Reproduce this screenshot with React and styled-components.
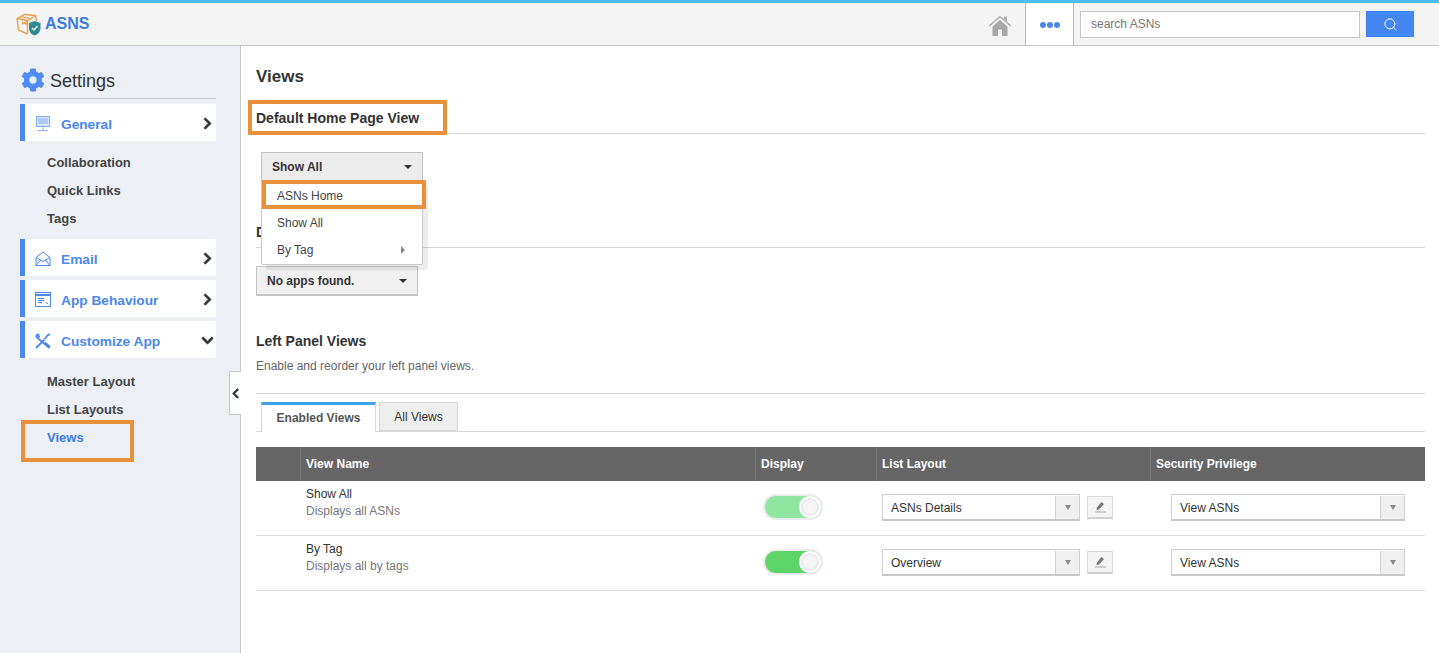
import React from "react";
import styled, { createGlobalStyle } from "styled-components";
import { FaCog, FaChevronRight, FaChevronDown, FaChevronLeft } from "react-icons/fa";
import { Search } from "lucide-react";

const Global = createGlobalStyle`
  html, body { margin: 0; padding: 0; height: 100%; overflow: hidden; background: #fff; }
  body { font-family: "Liberation Sans", Arial, sans-serif; color: #333; }
  * { box-sizing: border-box; }
`;

const Logo = () => (
  <svg width="27" height="23" viewBox="0 0 26 23" fill="none">
    <path d="M1.5 5.5 L9 1.5 L20 2.5 L21 8 M1.5 5.5 L3 17 L12 21 M1.5 5.5 L12 7.5 L20 2.5 M12 7.5 L12 20" stroke="#e9a04c" strokeWidth="1.4" />
    <path d="M5 3.7 L14 5.2 L14 6.5 M7 8 L7 11 L9 9.8 L10.5 11.5 L10.5 7.6" stroke="#e9a04c" strokeWidth="1.2" />
    <path d="M19 8 L25 10 L25 15 C25 19 22 21.5 19 22.5 C16 21.5 13.5 19 13.5 15 L13.5 10 Z" fill="#2e8b8f" />
    <path d="M16.5 15 L18.5 17 L22 13" stroke="#fff" strokeWidth="1.4" />
  </svg>
);

const HomeIcon = () => (
  <svg width="22" height="21" viewBox="0 0 22 21">
    <path d="M11 0.5 L15 4 V1.5 H18 V6.7 L22 10.3 L21 11.2 L11 2.6 L1 11.2 L0 10.3 Z" fill="#b0b0b0" />
    <path d="M3.5 11.5 L11 5 L18.5 11.5 V21 H13 V14.5 H9 V21 H3.5 Z" fill="#a6a6a6" />
  </svg>
);

const MonitorIcon = () => (
  <svg width="16" height="16" viewBox="0 0 16 16" fill="none" stroke="#85aef5">
    <rect x="1.5" y="0.5" width="13" height="10" fill="#d6e4fb" />
    <path d="M3 3h10M3 5h10M3 7h10M8 11v3M3 14.5h10" />
  </svg>
);

const MailIcon = () => (
  <svg width="16" height="16" viewBox="0 0 16 16" fill="none" stroke="#4a87ee">
    <path d="M1 6.5 L8 1 L15 6.5 V14.5 H1 Z M1 6.5 L8 10.5 L15 6.5 M1 14.5 L6 9 M15 14.5 L10 9" />
  </svg>
);

const WindowIcon = () => (
  <svg width="16" height="15" viewBox="0 0 16 15" fill="none" stroke="#4a87ee">
    <rect x="0.5" y="0.5" width="15" height="14" />
    <path d="M0.5 3h15" strokeWidth="2" />
    <path d="M3 6.5h6M3 8.5h6M3 10.5h4M11 10l2 2" />
  </svg>
);

const ToolsIcon = () => (
  <svg width="16" height="16" viewBox="0 0 16 16" fill="none" stroke="#4a87ee" strokeWidth="1.8">
    <path d="M1 15 L9.5 6.5 M3.5 1 C1.5 1.5 1 3 1.8 4.5 L14.5 15 M3.5 1 L3.5 3.5 L5 4" />
    <path d="M15 1 L12.5 2.5 L9.5 6 M10 9.5 L15 14" />
  </svg>
);

const PencilIcon = () => (
  <svg width="13" height="12" viewBox="0 0 13 12" fill="#777">
    <path d="M7.5 1 L10 3 L5 8.5 L2.5 9 L3 6.5 Z" />
    <path d="M1 11 H12" stroke="#aaa" strokeWidth="1" />
  </svg>
);

const Page = styled.div`
  width: 1439px;
  height: 653px;
  display: flex;
  flex-direction: column;
  border-top: 3px solid #4dbdf5;
`;

const Header = styled.header`
  height: 43px;
  flex: none;
  display: flex;
  align-items: stretch;
  background: #f4f4f4;
  border-bottom: 1px solid #c8c8c8;
`;

const Brand = styled.div`
  display: flex;
  align-items: center;
  gap: 3px;
  padding-left: 15px;
  margin-right: auto;
  font-size: 16px;
  font-weight: 700;
  color: #3c7be0;
`;

const HomeLink = styled.div`
  width: 52px;
  display: flex;
  align-items: center;
  justify-content: center;
  padding: 2px 0 0 2px;
`;

const MoreTab = styled.div`
  width: 49px;
  display: flex;
  align-items: center;
  justify-content: center;
  gap: 1px;
  background: #fff;
  border-left: 1px solid #bcbcbc;
  border-right: 1px solid #bcbcbc;
  padding-top: 2px;
`;

const Dot = styled.span`
  width: 6px;
  height: 6px;
  border-radius: 50%;
  background: #4a87ee;
`;

const SearchBar = styled.div`
  display: flex;
  align-items: center;
  gap: 6px;
  padding: 0 25px 0 6px;
`;

const SearchInput = styled.div`
  width: 280px;
  height: 27px;
  display: flex;
  align-items: center;
  padding-left: 10px;
  background: #fff;
  border: 1px solid #c8c8c8;
  font-size: 12px;
  color: #757575;
`;

const SearchButton = styled.div`
  width: 48px;
  height: 26px;
  display: flex;
  align-items: center;
  justify-content: center;
  background: #4487f2;
  border: 1px solid #3f7fe6;
  color: #fff;
`;

const Body = styled.div`
  flex: 1;
  display: flex;
  min-height: 0;
`;

const Sidebar = styled.aside`
  position: relative;
  width: 241px;
  flex: none;
  padding: 22px 24px 0 20px;
  background: #ecf0f5;
  border-right: 1px solid #c8c8c8;
`;

const SideTitle = styled.div`
  height: 31px;
  display: flex;
  align-items: center;
  gap: 5px;
  padding: 0 0 3px 1px;
  margin-bottom: 5px;
  border-bottom: 1px solid #c8c8c8;
  font-size: 18px;
  color: #333;
  svg { color: #4f8df5; font-size: 24px; margin-top: -3px; }
`;

const NavItem = styled.div`
  height: 37px;
  display: flex;
  align-items: center;
  margin-bottom: ${(p) => (p.$flush ? 0 : "4px")};
  padding: 2px 2px 0 10px;
  background: #fff;
  border-left: 5px solid #4a87f2;
  color: #4a87ee;
  font-size: 13.7px;
  font-weight: 700;
  svg:last-child {
    margin-left: auto;
    color: #333;
    font-size: 13px;
    stroke: currentColor;
    stroke-width: 35;
  }
`;

const NavLabel = styled.span`
  margin: 1px 0 0 10px;
`;

const SubList = styled.div`
  padding: ${(p) => p.$top}px 0 7px 27px;
`;

const SubItem = styled.div`
  height: 28px;
  display: flex;
  align-items: center;
  font-size: 13px;
  font-weight: 700;
  color: ${(p) => (p.$active ? "#3c7be0" : "#444")};
`;

const Collapse = styled.div`
  position: absolute;
  left: 229px;
  top: 325px;
  width: 12px;
  height: 44px;
  display: flex;
  align-items: center;
  justify-content: center;
  background: #fff;
  border: 1px solid #c8c8c8;
  border-right: none;
  font-size: 11px;
  color: #333;
  svg { stroke: currentColor; stroke-width: 35; }
`;

const Mark = styled.div`
  position: absolute;
  border: 4px solid #e8913a;
  border-radius: 1px;
  pointer-events: none;
`;

const ViewsMark = styled(Mark)`
  left: 21px;
  top: 374px;
  width: 113px;
  height: 42px;
`;

const HeadingMark = styled(Mark)`
  left: 7px;
  top: 54px;
  width: 199px;
  height: 35px;
`;

const MenuMark = styled(Mark)`
  left: 0;
  top: -2px;
  width: 164px;
  height: 29px;
`;

const Main = styled.main`
  position: relative;
  flex: 1;
  padding: 0 14px 0 15px;
`;

const PageTitle = styled.h1`
  height: 61px;
  margin: 0;
  padding-top: 21px;
  font-size: 17px;
  line-height: 20px;
  font-weight: 700;
  color: #333;
`;

const SectionHead = styled.div`
  height: ${(p) => p.$height}px;
  display: flex;
  align-items: flex-end;
  padding-bottom: 7px;
  border-bottom: 1px solid #d4d4d4;
  font-size: 14px;
  line-height: 16px;
  font-weight: 700;
  color: #333;
`;

const DropWrap = styled.div`
  position: relative;
  width: 162px;
  margin: ${(p) => (p.$nested ? "18px 0 0 5px" : "18px 0 0")};
`;

const DropButton = styled.div`
  height: ${(p) => p.$height}px;
  display: flex;
  align-items: center;
  justify-content: space-between;
  padding: ${(p) => (p.$flat ? 0 : "1px")} 10px 0;
  background: ${(p) => p.$bg};
  border: 1px solid #c4c4c4;
  border-bottom-width: ${(p) => (p.$flat ? 0 : "2px")};
  font-size: 12px;
  font-weight: 700;
  color: #333;
`;

const Caret = styled.span`
  width: 0;
  height: 0;
  border-left: 4px solid transparent;
  border-right: 4px solid transparent;
  border-top: 4px solid #333;
`;

const Menu = styled.div`
  position: absolute;
  left: 0;
  top: 29px;
  z-index: 2;
  width: 162px;
  height: 84px;
  background: #fff;
  border: 1px solid #c8c8c8;
  border-radius: 0 0 2px 2px;
  box-shadow: 5px 5px 0 rgba(0, 0, 0, 0.07);
`;

const MenuRow = styled.div`
  height: 27px;
  display: flex;
  align-items: center;
  justify-content: space-between;
  padding: 0 15px;
  font-size: 12px;
  color: #444;
`;

const SideCaret = styled.span`
  width: 0;
  height: 0;
  margin-right: 2px;
  border-top: 4px solid transparent;
  border-bottom: 4px solid transparent;
  border-left: 4px solid #888;
`;

const PanelHead = styled.div`
  margin-top: 37px;
  font-size: 14px;
  line-height: 16px;
  font-weight: 700;
  color: #333;
`;

const PanelDesc = styled.div`
  height: 36px;
  margin-top: 9px;
  padding-top: 1px;
  line-height: 14px;
  font-size: 12px;
  color: #666;
  border-bottom: 1px solid #d4d4d4;
`;

const Tabs = styled.div`
  height: 30px;
  margin-top: 8px;
  display: flex;
  align-items: flex-end;
  gap: 3px;
  padding-left: 5px;
  border-bottom: 1px solid #d8d8d8;
`;

const Tab = styled.div`
  height: ${(p) => (p.$on ? 30 : 29)}px;
  width: ${(p) => p.$w}px;
  display: flex;
  align-items: center;
  justify-content: center;
  margin-bottom: ${(p) => (p.$on ? "-1px" : 0)};
  padding-bottom: ${(p) => (p.$on ? "1px" : 0)};
  background: ${(p) => (p.$on ? "#fff" : "#eeeeee")};
  border: 1px solid #d8d8d8;
  border-top: ${(p) => (p.$on ? "3px solid #3aa5ee" : "1px solid #d8d8d8")};
  border-bottom: ${(p) => (p.$on ? "none" : "1px solid #d8d8d8")};
  font-size: 12px;
  font-weight: ${(p) => (p.$on ? 700 : 400)};
  color: ${(p) => (p.$on ? "#555" : "#333")};
`;

const Row = styled.div`
  display: grid;
  grid-template-columns: 44px 455px 121px 274px 275px;
`;

const HeadRow = styled(Row)`
  height: 34px;
  margin-top: 15px;
  background: #666;
  color: #fff;
  font-size: 12px;
  font-weight: 700;
`;

const HeadCell = styled.div`
  display: flex;
  align-items: center;
  padding-left: 5px;
  border-left: ${(p) => (p.$first ? "none" : "1px solid #7a7a7a")};
`;

const DataRow = styled(Row)`
  height: 55px;
  border-bottom: 1px solid #dcdcdc;
  align-items: center;
`;

const NameCell = styled.div`
  grid-column: 2;
  padding: 0 0 10px 6px;
  font-size: 12px;
  line-height: 17px;
  color: #333;
`;

const NameHint = styled.div`
  color: #777;
`;

const ToggleCell = styled.div`
  padding-left: 8px;
`;

const Toggle = styled.div`
  position: relative;
  width: 60px;
  height: 26px;
  margin-top: -2px;
  border-radius: 13px;
  background: #ececec;
  padding: 2px;
`;

const ToggleTrack = styled.div`
  height: 100%;
  border-radius: 11px;
  background: ${(p) => p.$color};
`;

const ToggleKnob = styled.div`
  position: absolute;
  right: 2px;
  top: 2px;
  width: 22px;
  height: 22px;
  border-radius: 50%;
  background: #f6f6f6;
  border: 2px solid #fff;
  box-shadow: inset 0 0 3px #ccc;
`;

const LayoutCell = styled.div`
  display: flex;
  align-items: center;
  gap: 7px;
  padding-left: 6px;
`;

const PrivilegeCell = styled.div`
  padding-left: 21px;
`;

const Combo = styled.div`
  width: ${(p) => p.$w}px;
  height: 27px;
  margin-top: -1px;
  padding-top: 1px;
  display: flex;
  align-items: center;
  background: #fff;
  border: 1px solid #d0d0d0;
  border-bottom: 2px solid #c8c8c8;
  font-size: 12px;
  color: #333;
`;

const ComboText = styled.span`
  flex: 1;
  padding-left: 8px;
`;

const ComboArrow = styled.span`
  width: 24px;
  height: 100%;
  display: flex;
  align-items: center;
  justify-content: center;
  background: #efefef;
  border-left: 1px solid #d0d0d0;
  &::after {
    content: "";
    border-left: 3px solid transparent;
    border-right: 3px solid transparent;
    border-top: 5px solid #888;
  }
`;

const EditButton = styled.div`
  width: 26px;
  height: 23px;
  margin-top: -2px;
  display: flex;
  align-items: center;
  justify-content: center;
  background: #f4f4f4;
  border: 1px solid #d8d8d8;
  border-bottom: 2px solid #cfcfcf;
`;

const rows = [
  { name: "Show All", hint: "Displays all ASNs", layout: "ASNs Details", color: "#8fe6a0" },
  { name: "By Tag", hint: "Displays all by tags", layout: "Overview", color: "#5fd468" },
];

export default function App() {
  return (
    <Page>
      <Global />
      <Header>
        <Brand>
          <Logo />
          ASNS
        </Brand>
        <HomeLink>
          <HomeIcon />
        </HomeLink>
        <MoreTab>
          <Dot />
          <Dot />
          <Dot />
        </MoreTab>
        <SearchBar>
          <SearchInput>search ASNs</SearchInput>
          <SearchButton>
            <Search size={15} strokeWidth={1.6} />
          </SearchButton>
        </SearchBar>
      </Header>
      <Body>
        <Sidebar>
          <SideTitle>
            <FaCog />
            Settings
          </SideTitle>
          <NavItem $flush>
            <MonitorIcon />
            <NavLabel>General</NavLabel>
            <FaChevronRight />
          </NavItem>
          <SubList $top={7}>
            <SubItem>Collaboration</SubItem>
            <SubItem>Quick Links</SubItem>
            <SubItem>Tags</SubItem>
          </SubList>
          <NavItem>
            <MailIcon />
            <NavLabel>Email</NavLabel>
            <FaChevronRight />
          </NavItem>
          <NavItem>
            <WindowIcon />
            <NavLabel>App Behaviour</NavLabel>
            <FaChevronRight />
          </NavItem>
          <NavItem $flush>
            <ToolsIcon />
            <NavLabel>Customize App</NavLabel>
            <FaChevronDown />
          </NavItem>
          <SubList $top={9}>
            <SubItem>Master Layout</SubItem>
            <SubItem>List Layouts</SubItem>
            <SubItem $active>Views</SubItem>
          </SubList>
          <ViewsMark />
          <Collapse>
            <FaChevronLeft />
          </Collapse>
        </Sidebar>
        <Main>
          <PageTitle>Views</PageTitle>
          <SectionHead $height={27}>Default Home Page View</SectionHead>
          <HeadingMark />
          <DropWrap $nested>
            <DropButton $height={29} $bg="#ececec" $flat>
              Show All
              <Caret />
            </DropButton>
            <Menu>
              <MenuRow>ASNs Home</MenuRow>
              <MenuRow>Show All</MenuRow>
              <MenuRow>
                By Tag
                <SideCaret />
              </MenuRow>
              <MenuMark />
            </Menu>
          </DropWrap>
          <SectionHead $height={67}>D</SectionHead>
          <DropWrap>
            <DropButton $height={30} $bg="#f0f0f0">
              No apps found.
              <Caret />
            </DropButton>
          </DropWrap>
          <PanelHead>Left Panel Views</PanelHead>
          <PanelDesc>Enable and reorder your left panel views.</PanelDesc>
          <Tabs>
            <Tab $on $w={115}>
              Enabled Views
            </Tab>
            <Tab $w={79}>All Views</Tab>
          </Tabs>
          <HeadRow>
            <HeadCell $first />
            <HeadCell>View Name</HeadCell>
            <HeadCell>Display</HeadCell>
            <HeadCell>List Layout</HeadCell>
            <HeadCell>Security Privilege</HeadCell>
          </HeadRow>
          {rows.map((row) => (
            <DataRow key={row.name}>
              <NameCell>
                {row.name}
                <NameHint>{row.hint}</NameHint>
              </NameCell>
              <ToggleCell>
                <Toggle>
                  <ToggleTrack $color={row.color} />
                  <ToggleKnob />
                </Toggle>
              </ToggleCell>
              <LayoutCell>
                <Combo $w={198}>
                  <ComboText>{row.layout}</ComboText>
                  <ComboArrow />
                </Combo>
                <EditButton>
                  <PencilIcon />
                </EditButton>
              </LayoutCell>
              <PrivilegeCell>
                <Combo $w={234}>
                  <ComboText>View ASNs</ComboText>
                  <ComboArrow />
                </Combo>
              </PrivilegeCell>
            </DataRow>
          ))}
        </Main>
      </Body>
    </Page>
  );
}
